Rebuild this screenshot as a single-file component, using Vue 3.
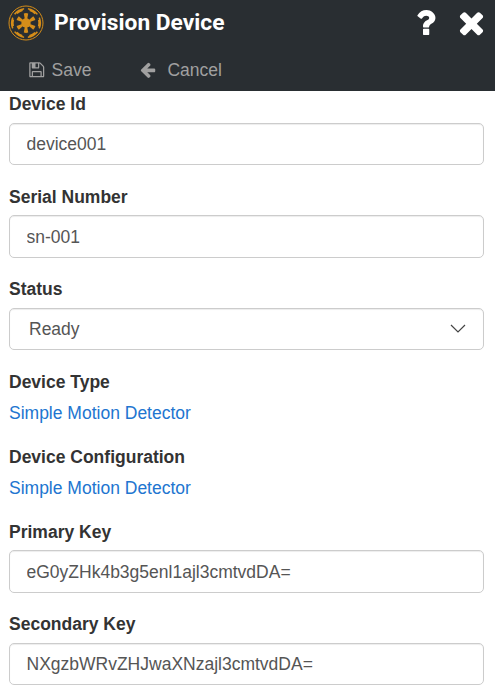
<script setup>
import { ref } from 'vue'

const deviceId = ref('device001')
const serialNumber = ref('sn-001')
const status = ref('Ready')
const primaryKey = ref('eG0yZHk4b3g5enl1ajl3cmtvdDA=')
const secondaryKey = ref('NXgzbWRvZHJwaXNzajl3cmtvdDA=')
const angles = [0, 60, 120, 180, 240, 300]
</script>

<template>
  <div class="page">
    <header class="header">
      <div class="title-row">
        <svg class="logo" viewBox="-18 -18 36 36">
          <circle r="17" class="ring" />
          <g v-for="a in angles" :key="a" :transform="`rotate(${a})`">
            <path class="solid" d="M-1 -3 L-2.2 -9.6 Q0 -10.2 2.2 -9.6 L1 -3 Z" />
            <path class="solid" d="M1.9 -15 A15.1 15.1 0 0 1 12 -9.1 L10.7 -8.3 L9.5 -9.4 L8.7 -8.7 A12.4 12.4 0 0 0 3.4 -11.9 L3.7 -13 L1.9 -13.4 Z" />
          </g>
          <circle r="4.7" class="solid" />
        </svg>
        <h1>Provision Device</h1>
        <svg class="action help" viewBox="0 0 1792 1792"><path d="M1088 1256v240q0 16-12 28t-28 12h-240q-16 0-28-12t-12-28v-240q0-16 12-28t28-12h240q16 0 28 12t12 28zm316-600q0 54-15.5 101t-35 76.5-55 59.5-57.5 43.5-61 35.5q-41 23-68.5 65t-27.5 67q0 17-12 32.5t-28 15.5h-240q-15 0-25.5-18.5t-10.5-37.5v-45q0-83 65-156.5t143-108.5q59-27 84-56t25-76q0-42-46.5-74t-107.5-32q-65 0-108 29-35 25-107 115-13 16-31 16-12 0-25-8l-164-125q-13-10-15.5-25t5.5-28q160-266 464-266 80 0 161 31t146 83 106 127.5 41 158.5z" /></svg>
        <svg class="action" viewBox="0 0 1792 1792"><path d="M1490 1322q0 40-28 68l-136 136q-28 28-68 28t-68-28l-294-294-294 294q-28 28-68 28t-68-28l-136-136q-28-28-28-68t28-68l294-294-294-294q-28-28-28-68t28-68l136-136q28-28 68-28t68 28l294 294 294-294q28-28 68-28t68 28l136 136q28 28 28 68t-28 68l-294 294 294 294q28 28 28 68z" /></svg>
      </div>
      <nav class="toolbar">
        <a class="tool save">
          <svg viewBox="0 0 1792 1792"><path d="M512 1536h768v-384h-768v384zm896 0h128v-896q0-14-10-38.5t-20-34.5l-281-281q-10-10-34-20t-39-10v416q0 40-28 68t-68 28h-576q-40 0-68-28t-28-68v-416h-128v1280h128v-416q0-40 28-68t68-28h832q40 0 68 28t28 68v416zm-384-928v-320q0-13-9.5-22.5t-22.5-9.5h-192q-13 0-22.5 9.5t-9.5 22.5v320q0 13 9.5 22.5t22.5 9.5h192q13 0 22.5-9.5t9.5-22.5zm640 32v928q0 40-28 68t-68 28h-1344q-40 0-68-28t-28-68v-1344q0-40 28-68t68-28h928q40 0 88 20t76 48l280 280q28 28 48 76t20 88z" /></svg>
          <span>Save</span>
        </a>
        <a class="tool cancel">
          <svg viewBox="0 0 1792 1792"><path d="M1664 896v128q0 53-32.5 90.5t-84.5 37.5h-704l293 294q38 36 38 90t-38 90l-75 76q-37 37-90 37-52 0-91-37l-651-652q-37-37-37-90 0-52 37-91l651-650q38-38 91-38 52 0 90 38l75 74q38 38 38 91t-38 91l-293 293h704q52 0 84.5 37.5t32.5 90.5z" /></svg>
          <span>Cancel</span>
        </a>
      </nav>
    </header>

    <form class="form" @submit.prevent>
      <div class="group">
        <label for="device-id">Device Id</label>
        <input id="device-id" v-model="deviceId" class="control" type="text" spellcheck="false" />
      </div>
      <div class="group">
        <label for="serial">Serial Number</label>
        <input id="serial" v-model="serialNumber" class="control" type="text" spellcheck="false" />
      </div>
      <div class="group">
        <label for="status">Status</label>
        <div class="control select">
          <select id="status" v-model="status"><option>Ready</option></select>
          <svg viewBox="0 0 16 10"><path d="M1 1 L8 8 L15 1" /></svg>
        </div>
      </div>
      <div class="group">
        <label>Device Type</label>
        <a class="link">Simple Motion Detector</a>
      </div>
      <div class="group">
        <label>Device Configuration</label>
        <a class="link">Simple Motion Detector</a>
      </div>
      <div class="group">
        <label for="primary">Primary Key</label>
        <input id="primary" v-model="primaryKey" class="control" type="text" spellcheck="false" />
      </div>
      <div class="group">
        <label for="secondary">Secondary Key</label>
        <input id="secondary" v-model="secondaryKey" class="control" type="text" spellcheck="false" />
      </div>
    </form>
  </div>
</template>

<style>
body {
  margin: 0;
  background: #fff;
}
</style>

<style scoped>
.page {
  height: 691px;
  overflow: hidden;
  font: 17.5px/25px "Liberation Sans", Arial, sans-serif;
  color: #333;
}
.header {
  height: 91px;
  background: #292e32;
}
.title-row {
  display: flex;
  align-items: center;
  height: 44px;
  padding: 0 6px 0 7.5px;
}
.logo {
  width: 36px;
  height: 36px;
  margin-top: 1px;
}
.ring {
  fill: none;
  stroke: #d58d19;
  stroke-width: 1;
}
.solid {
  fill: #d58d19;
}
h1 {
  flex: 1;
  margin: 2px 0 0 10.5px;
  font: 700 22.75px/30px Roboto, sans-serif;
  color: #fff;
}
.action {
  width: 35px;
  height: 35px;
  margin-top: 1px;
  fill: #fff;
}
.help {
  margin-right: 11px;
}
.toolbar {
  display: flex;
  align-items: center;
  height: 50px;
  padding: 1px 0 0 28px;
  color: #a0a0a0;
}
.tool {
  display: flex;
  align-items: center;
}
.tool svg {
  width: 17.5px;
  height: 17.5px;
  fill: currentColor;
}
.save span {
  margin-left: 6px;
}
.cancel {
  margin-left: 47.5px;
}
.cancel span {
  margin-left: 11px;
}
.form {
  padding: 0.25px 11px 0 9px;
}
.group {
  display: flex;
  flex-direction: column;
  gap: 6.25px;
  margin-bottom: 18.75px;
}
label,
.link {
  box-sizing: border-box;
  height: 25px;
  padding-top: 1px;
}
label {
  font-weight: 700;
}
.control {
  box-sizing: border-box;
  width: 100%;
  height: 42.5px;
  margin: 0;
  padding: 2px 16.5px 0;
  border: 1px solid #ccc;
  border-radius: 5px;
  box-shadow: inset 0 1px 1px rgba(0, 0, 0, 0.075);
  background: #fff;
  font: inherit;
  color: #555;
  outline: none;
}
.select {
  display: flex;
  align-items: center;
  padding: 1px 17.5px 0 19px;
}
select {
  flex: 1;
  appearance: none;
  padding: 1px 0 0;
  border: 0;
  background: transparent;
  font: inherit;
  color: #555;
}
.select svg {
  width: 16px;
  height: 10px;
  fill: none;
  stroke: #444;
  stroke-width: 1.2;
}
.link {
  color: #2175d0;
}
</style>
